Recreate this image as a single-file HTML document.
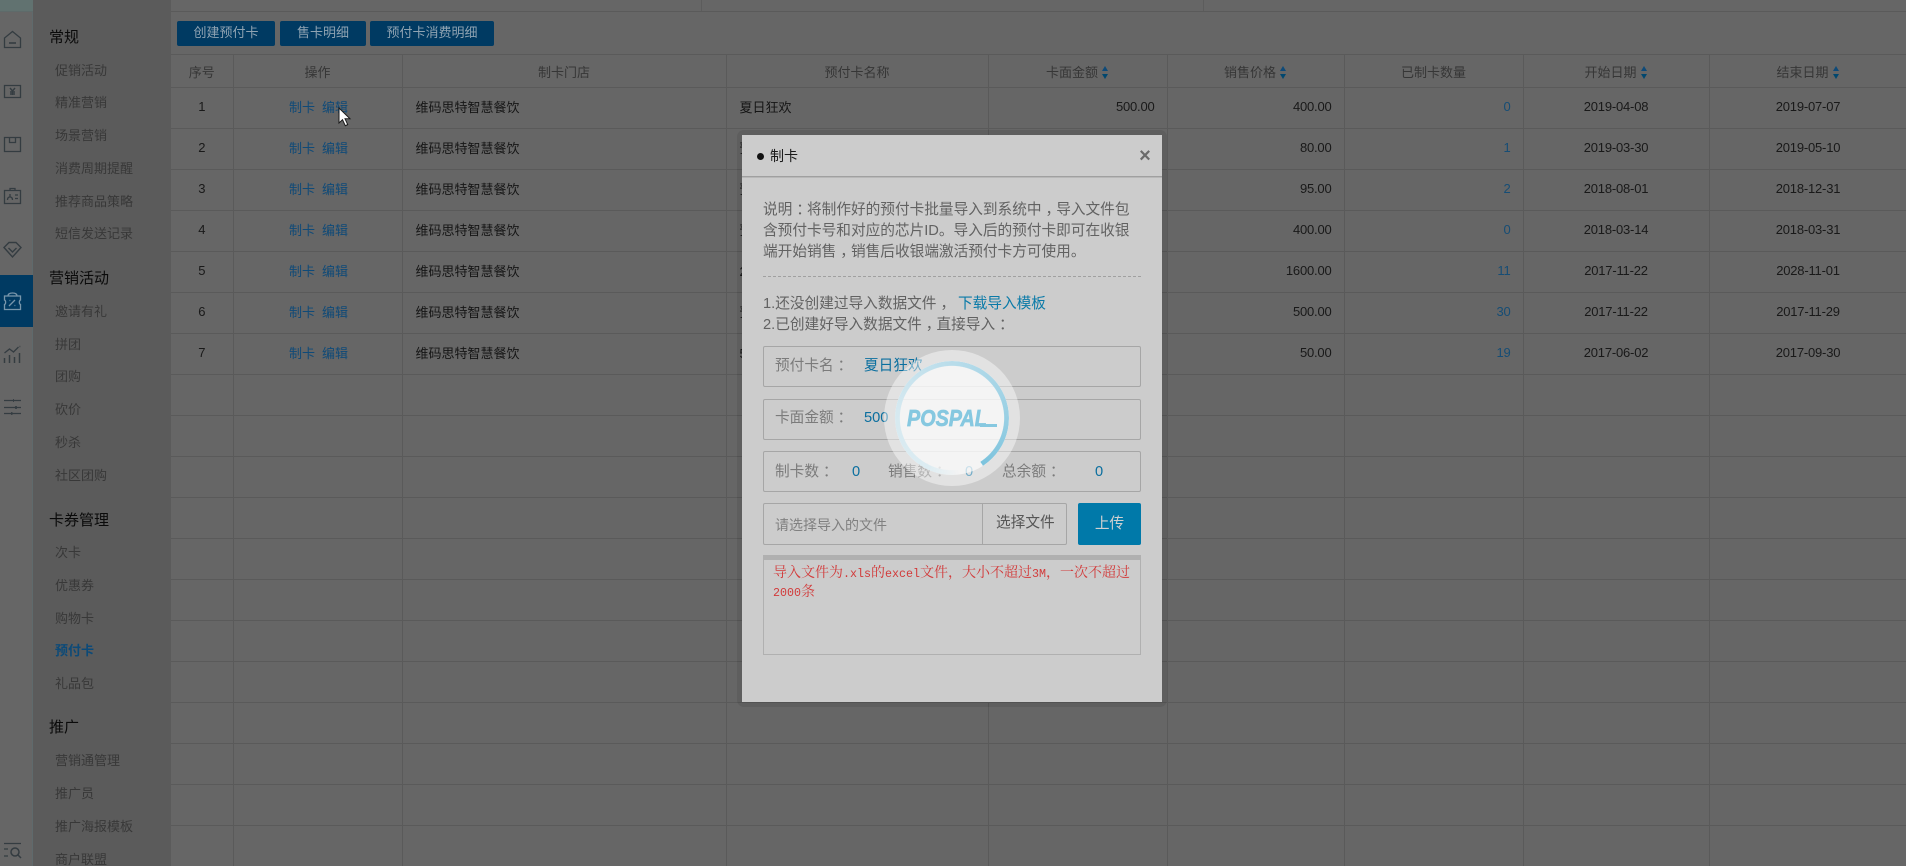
<!DOCTYPE html>
<html lang="zh-CN"><head><meta charset="utf-8"><title>预付卡</title>
<style>
*{box-sizing:border-box}
html,body{margin:0;padding:0;width:1906px;height:866px;overflow:hidden;background:#666}
body{position:relative;font-family:"Liberation Sans","Noto Sans CJK SC",sans-serif;font-size:13px;color:#222}
.abs,.rail,.side,.top,table,.m,.m div,.s{position:absolute}
.rail{left:0;top:0;width:33px;height:866px;background:#666;border-right:1px solid #5f6a6c}
.rail .strip{position:absolute;left:0;top:0;width:33px;height:12px;background:#617270;border-bottom:1px solid #5e6a6a}
.rail .act{position:absolute;left:0;top:275px;width:34px;height:52px;background:#003a62}
.rail svg{position:absolute;left:0;top:0}
.side{left:33px;top:0;width:138px;height:866px;background:#5b5b5b}
.s{left:22px;color:#383838;font-size:13px;line-height:18px;white-space:nowrap;margin-top:-8.5px}
.s.h{left:16px;color:#0a0a0a;font-size:15px;line-height:20px;margin-top:-9px}
.s.on{color:#0c4a78;font-weight:700}
.top{left:171px;top:0;width:1735px;height:12px;border-bottom:1px solid #5a5a5a}
.top i{position:absolute;top:0;width:1px;height:11px;background:#5c5c5c}
.b{position:absolute;top:21px;height:25px;background:#003a62;border-radius:2px;color:#8fa3b2;font-size:13px;line-height:24px;text-align:center}
table{left:171px;top:54px;width:1736px;border-collapse:collapse;table-layout:fixed;border-top:1px solid #5a5a5a}
td,th{border-bottom:1px solid #5a5a5a;border-right:1px solid #5a5a5a;padding:0 0 4px;font-weight:400;height:41px;white-space:nowrap;overflow:hidden;text-align:center;font-size:13px;color:#191919}
th{height:33px;color:#363636;padding:0}
td.n{font-size:13px;letter-spacing:-.2px}
td.c{padding-left:2px}
td.l{text-align:left;padding-left:13px;color:#151515}
td.r{text-align:right;padding-right:12px}
td.k{color:#164d75}
a{color:#0f4a78;text-decoration:none}
td a+a{margin-left:7px}
.sort{display:inline-block;width:7px;height:13px;margin-left:4px;vertical-align:-2px;position:relative}
.sort:before,.sort:after{content:"";position:absolute;left:0;border-left:3.5px solid transparent;border-right:3.5px solid transparent}
.sort:before{top:0;border-bottom:5.5px solid #0f4a78}
.sort:after{bottom:0;border-top:5.5px solid #00476f}
.shadow{position:absolute;left:737px;top:130px;width:430px;height:577px;border-radius:7px;background:rgba(0,0,0,.08)}
.m{left:742px;top:135px;width:420px;height:567px;background:#ccc;color:#626262;font-size:14.67px}
.m div{white-space:nowrap}
.m u{text-decoration:none;position:relative;left:4px}
.box{left:21px;width:378px;border:1px solid #a6a6a6;border-radius:2px}
.lb{color:#7b7b7b;line-height:20px;margin-top:-9px}
.v{color:#0b6f9f;line-height:20px;margin-top:-9px}
.red{font-family:"Liberation Mono","Noto Serif CJK SC",serif;font-size:14px;line-height:18.5px;color:#d23a3a;letter-spacing:0}
.red span{font-size:11.67px}
.o{position:absolute;left:884px;top:350px;width:136px;height:136px;border-radius:50%;background:rgba(255,255,255,.43)}
.d{position:absolute;left:895px;top:361px;width:114px;height:114px;border-radius:50%;background:rgba(255,255,255,.62)}
.ring{position:absolute;left:895px;top:361px;width:114px;height:114px;border-radius:50%;
background:conic-gradient(from 147deg,rgba(205,230,240,0) 0deg,rgba(205,230,240,0) 25deg,#dcecf2 60deg,#d6e9f0 130deg,#b8dcea 215deg,#9ad0e4 300deg,#7cc3dd 360deg);
-webkit-mask:radial-gradient(closest-side,transparent 91%,#000 92%);mask:radial-gradient(closest-side,transparent 91%,#000 92%)}
.logo{position:absolute;left:907px;top:406px;height:24px;line-height:24px;font-size:23px;font-weight:700;font-style:italic;color:#86c8e0;-webkit-text-stroke:.7px #86c8e0;transform:scaleX(.86);transform-origin:0 50%;white-space:nowrap;font-family:"Liberation Sans",sans-serif}
.tail{position:absolute;left:980px;top:424px;width:17px;height:3px;background:#86c8e0}
</style></head><body>

<div class="rail"><div class="strip"></div><div class="act"></div>
<svg width="34" height="866" fill="none" stroke="#343c41" stroke-width="1.3">
<path d="M4.500 47.500V38L12.500 31.500L20.500 38V47.500Z"/><path d="M9 43h7" stroke-width="1.600"/>
<path d="M4.500 85.500h16v12h-16z"/><path d="M10 88l2.500 3 2.500-3M12.500 91v4M10 92h5M10 94h5" stroke-width="1.400"/>
<path d="M4.500 137.500h16v14h-16z"/><path d="M9.500 137.500v5h6v-5"/>
<path d="M4.500 190.500h16v13h-16z"/><path d="M10 190v-1.500h5v1.500"/><path d="M7.500 200c0-2 1-3 2.500-3s2.500 1 2.500 3M10 196.500v-2.500M15 195h3M15 198.500h3"/>
<path d="M9 242.500h7l5 5-8.500 9.500L4 247.500z" stroke-width="1.400"/><path d="M8.500 248l4 4 4-4" stroke-width="1.400"/>
<path d="M4.500 296h16v4c-1.500.5-1.500 4 0 4.500v5h-16v-5c1.500-.5 1.500-4 0-4.500z" stroke="#7896ab"/><path d="M8 296c0-2.500 2-3 4.500-3s4.500.5 4.500 3" stroke="#7896ab"/><path d="M9 306l6-6M9.500 300.500h.8M14.500 305.500h.8" stroke="#7896ab" stroke-width="1.300"/>
<path d="M4.500 363v-5M9.500 363v-8M14.500 363v-6M19.500 363v-10" stroke-width="1.500"/><path d="M4.500 353l5-4 4 3 5-5"/><path d="M19.500 346.500h.8" stroke-width="1.500"/>
<path d="M4 400.500h17M4 407.500h17M4 413.500h17" stroke-width="1.200"/><path d="M13 400.500h1M15 407.500h2M11 413.500h1.500" stroke-width="2.800"/>
<path d="M4 843.500h17" stroke-width="1.200"/><path d="M4 849h4M4 856h4" stroke-width="1.300"/><circle cx="15" cy="852" r="4" stroke-width="1.500"/><path d="M18 855l3 3" stroke-width="1.500"/>
</svg></div>

<div class="side">
<div class="s h" style="top:37px">常规</div>
<div class="s" style="top:70px">促销活动</div>
<div class="s" style="top:102.500px">精准营销</div>
<div class="s" style="top:135px">场景营销</div>
<div class="s" style="top:168px">消费周期提醒</div>
<div class="s" style="top:201px">推荐商品策略</div>
<div class="s" style="top:233px">短信发送记录</div>
<div class="s h" style="top:278px">营销活动</div>
<div class="s" style="top:311px">邀请有礼</div>
<div class="s" style="top:344px">拼团</div>
<div class="s" style="top:376px">团购</div>
<div class="s" style="top:409px">砍价</div>
<div class="s" style="top:442px">秒杀</div>
<div class="s" style="top:475px">社区团购</div>
<div class="s h" style="top:520px">卡券管理</div>
<div class="s" style="top:552px">次卡</div>
<div class="s" style="top:585px">优惠券</div>
<div class="s" style="top:618px">购物卡</div>
<div class="s on" style="top:650px">预付卡</div>
<div class="s" style="top:683px">礼品包</div>
<div class="s h" style="top:727px">推广</div>
<div class="s" style="top:760px">营销通管理</div>
<div class="s" style="top:793px">推广员</div>
<div class="s" style="top:826px">推广海报模板</div>
<div class="s" style="top:859px">商户联盟</div>
</div>

<div class="top"><i style="left:530px"></i><i style="left:1032px"></i></div>
<div class="b" style="left:177px;width:98px">创建预付卡</div>
<div class="b" style="left:280px;width:86px">售卡明细</div>
<div class="b" style="left:370px;width:124px">预付卡消费明细</div>

<table>
<colgroup><col style="width:62px"><col style="width:169px"><col style="width:324px"><col style="width:262px"><col style="width:179px"><col style="width:177px"><col style="width:179px"><col style="width:186px"><col style="width:198px"></colgroup>
<tr><th>序号</th><th>操作</th><th>制卡门店</th><th>预付卡名称</th><th>卡面金额<span class="sort"></span></th><th>销售价格<span class="sort"></span></th><th>已制卡数量</th><th>开始日期<span class="sort"></span></th><th>结束日期<span class="sort"></span></th></tr>
<tr><td class="n">1</td><td class="c"><a>制卡</a><a>编辑</a></td><td class="l">维码思特智慧餐饮</td><td class="l">夏日狂欢</td><td class="r n">500.00</td><td class="r n">400.00</td><td class="r n k">0</td><td class="n">2019-04-08</td><td class="n">2019-07-07</td></tr>
<tr><td class="n">2</td><td class="c"><a>制卡</a><a>编辑</a></td><td class="l">维码思特智慧餐饮</td><td class="l">预付卡</td><td class="r n">100.00</td><td class="r n">80.00</td><td class="r n k">1</td><td class="n">2019-03-30</td><td class="n">2019-05-10</td></tr>
<tr><td class="n">3</td><td class="c"><a>制卡</a><a>编辑</a></td><td class="l">维码思特智慧餐饮</td><td class="l">预付卡</td><td class="r n">100.00</td><td class="r n">95.00</td><td class="r n k">2</td><td class="n">2018-08-01</td><td class="n">2018-12-31</td></tr>
<tr><td class="n">4</td><td class="c"><a>制卡</a><a>编辑</a></td><td class="l">维码思特智慧餐饮</td><td class="l">预付卡</td><td class="r n">500.00</td><td class="r n">400.00</td><td class="r n k">0</td><td class="n">2018-03-14</td><td class="n">2018-03-31</td></tr>
<tr><td class="n">5</td><td class="c"><a>制卡</a><a>编辑</a></td><td class="l">维码思特智慧餐饮</td><td class="l">2000元卡</td><td class="r n">2000.00</td><td class="r n">1600.00</td><td class="r n k">11</td><td class="n">2017-11-22</td><td class="n">2028-11-01</td></tr>
<tr><td class="n">6</td><td class="c"><a>制卡</a><a>编辑</a></td><td class="l">维码思特智慧餐饮</td><td class="l">预付卡</td><td class="r n">500.00</td><td class="r n">500.00</td><td class="r n k">30</td><td class="n">2017-11-22</td><td class="n">2017-11-29</td></tr>
<tr><td class="n">7</td><td class="c"><a>制卡</a><a>编辑</a></td><td class="l">维码思特智慧餐饮</td><td class="l">50元卡</td><td class="r n">50.00</td><td class="r n">50.00</td><td class="r n k">19</td><td class="n">2017-06-02</td><td class="n">2017-09-30</td></tr>
<tr><td></td><td></td><td></td><td></td><td></td><td></td><td></td><td></td><td></td></tr>
<tr><td></td><td></td><td></td><td></td><td></td><td></td><td></td><td></td><td></td></tr>
<tr><td></td><td></td><td></td><td></td><td></td><td></td><td></td><td></td><td></td></tr>
<tr><td></td><td></td><td></td><td></td><td></td><td></td><td></td><td></td><td></td></tr>
<tr><td></td><td></td><td></td><td></td><td></td><td></td><td></td><td></td><td></td></tr>
<tr><td></td><td></td><td></td><td></td><td></td><td></td><td></td><td></td><td></td></tr>
<tr><td></td><td></td><td></td><td></td><td></td><td></td><td></td><td></td><td></td></tr>
<tr><td></td><td></td><td></td><td></td><td></td><td></td><td></td><td></td><td></td></tr>
<tr><td></td><td></td><td></td><td></td><td></td><td></td><td></td><td></td><td></td></tr>
<tr><td></td><td></td><td></td><td></td><td></td><td></td><td></td><td></td><td></td></tr>
<tr><td></td><td></td><td></td><td></td><td></td><td></td><td></td><td></td><td></td></tr>
<tr><td></td><td></td><td></td><td></td><td></td><td></td><td></td><td></td><td></td></tr>
</table>

<div class="shadow"></div>
<div class="m">
  <div style="left:0;top:41px;width:420px;height:1px;background:#a0a0a0"></div>
  <div style="left:0;top:42px;width:420px;height:1px;background:#b8b8b8"></div>
  <div style="left:15px;top:18px;width:7px;height:7px;border-radius:50%;background:#111"></div>
  <div style="left:28px;top:11px;font-size:14px;line-height:20px;color:#1a1a1a">制卡</div>
  <div style="left:393px;top:8px;width:20px;text-align:center;font-size:20px;line-height:26px;font-weight:700;color:#6a6a6a">×</div>
  <div style="left:21px;top:65px;line-height:21px">说明<u>：</u>将制作好的预付卡批量导入到系统中<u>，</u>导入文件包<br>含预付卡号和对应的芯片ID。导入后的预付卡即可在收银<br>端开始销售<u>，</u>销售后收银端激活预付卡方可使用。</div>
  <div style="left:21px;top:141px;width:378px;border-top:1px dashed #a0a0a0"></div>
  <div style="left:21px;top:159px;line-height:21px">1.还没创建过导入数据文件<u>，</u><br>2.已创建好导入数据文件<u>，</u>直接导入<u>：</u></div>
  <div style="left:216px;top:159px;line-height:21px;color:#0a7aa8">下载导入模板</div>

  <div class="box" style="top:211px;height:41px"></div>
  <div class="lb" style="left:33px;top:230px">预付卡名<u>：</u></div><div class="v" style="left:122px;top:230px">夏日狂欢</div>
  <div class="box" style="top:264px;height:41px"></div>
  <div class="lb" style="left:33px;top:282px">卡面金额<u>：</u></div><div class="v" style="left:122px;top:282px">500</div>
  <div class="box" style="top:316px;height:41px"></div>
  <div class="lb" style="left:33px;top:336px">制卡数<u>：</u></div><div class="v" style="left:110px;top:336px">0</div>
  <div class="lb" style="left:146px;top:336px">销售数<u>：</u></div><div class="v" style="left:223px;top:336px">0</div>
  <div class="lb" style="left:260px;top:336px">总余额<u>：</u></div><div class="v" style="left:353px;top:336px">0</div>

  <div class="box" style="top:368px;width:304px;height:42px"></div>
  <div style="left:240px;top:368px;width:1px;height:42px;background:#a6a6a6"></div>
  <div class="lb" style="left:33px;top:389px;color:#808080;font-size:14px">请选择导入的文件</div>
  <div style="left:254px;top:378px;line-height:20px;color:#565656">选择文件</div>
  <div style="left:336px;top:368px;width:63px;height:42px;border-radius:2px;background:#0079a9;color:#d0d0d0;text-align:center;line-height:43px">上传</div>

  <div style="left:21px;top:420px;width:378px;height:100px;border:1px solid #b0b0b0;border-top:5px solid #b0b0b0"></div>
  <div class="red" style="left:31px;top:430px">导入文件为<span>.xls</span>的<span>excel</span>文件，大小不超过<span>3M</span>，一次不超过<br><span>2000</span>条</div>
</div>

<div class="o"></div><div class="d"></div><div class="ring"></div>
<div class="logo">POSPAL</div><div class="tail"></div>

<svg style="position:absolute;left:338px;top:107px" width="14" height="20" viewBox="0 0 14 20"><path d="M1 1v15l3.500-3.300 2.800 6 2.400-1.100-2.700-5.800H12z" fill="#fff" stroke="#1a1a1a" stroke-width="1"/></svg>
</body></html>
